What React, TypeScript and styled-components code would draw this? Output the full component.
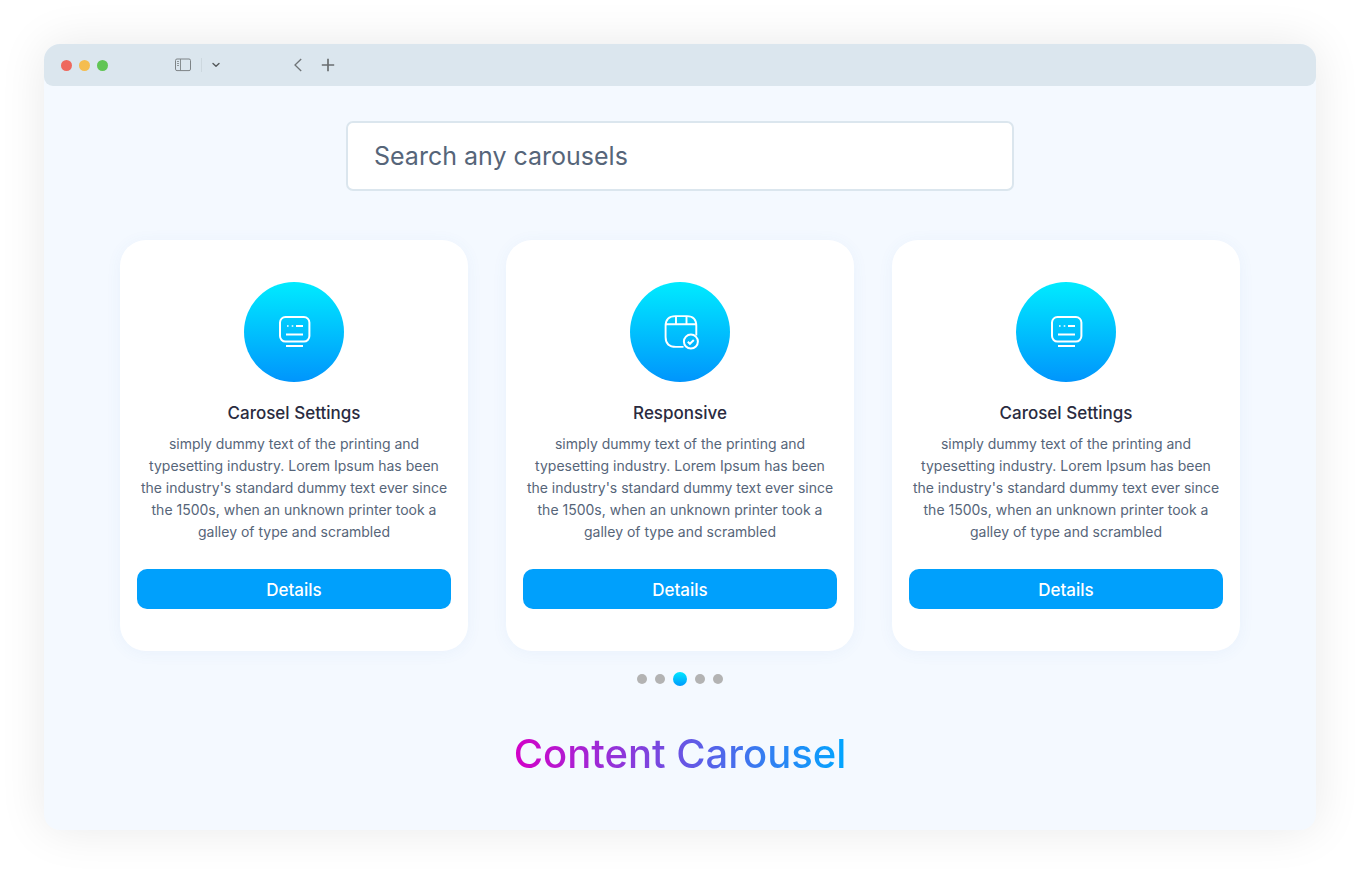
import React from "react";
import styled, { createGlobalStyle } from "styled-components";

const GlobalStyle = createGlobalStyle`
  *, *::before, *::after { box-sizing: border-box; }
  body {
    margin: 0;
    background: #fff;
    font-family: Inter, "Liberation Sans", sans-serif;
  }
`;

const Page = styled.div`
  min-height: 100vh;
  padding: 44px 44px 45px;
  display: flex;
`;

const BrowserWindow = styled.div`
  flex: 1;
  display: flex;
  flex-direction: column;
  border-radius: 16px;
  background: #f4f9ff;
  box-shadow: 0 0 48px rgba(0, 0, 0, 0.09);
`;

const TitleBar = styled.header`
  height: 42px;
  display: flex;
  align-items: center;
  padding: 0 17px;
  border-radius: 16px 16px 9px 9px;
  background: #dbe6ee;
`;

const TrafficLights = styled.div`
  display: flex;
  gap: 7px;
`;

const Light = styled.span<{ $color: string }>`
  width: 11px;
  height: 11px;
  border-radius: 50%;
  background: ${(p) => p.$color};
`;

const ToolGroup = styled.div<{ $start: number; $gap: number }>`
  display: flex;
  align-items: center;
  gap: ${(p) => p.$gap}px;
  margin-left: ${(p) => p.$start}px;
`;

const ToolButton = styled.button`
  display: flex;
  padding: 0;
  border: 0;
  background: none;
  cursor: pointer;
`;

const ToolDivider = styled.span`
  width: 1px;
  height: 14px;
  background: #cdd8df;
`;

const Content = styled.main`
  flex: 1;
  display: flex;
  flex-direction: column;
  align-items: center;
  padding: 35px 76px 48px;
`;

const SearchInput = styled.input`
  width: calc(60% - 4px);
  height: 70px;
  padding: 0 26px;
  border: 2px solid #dbe6ee;
  border-radius: 7px;
  background: #fff;
  color: #566579;
  font: 400 25px/36px Inter, "Liberation Sans", sans-serif;
  outline: none;
  &::placeholder {
    color: #566579;
    opacity: 1;
  }
`;

const CardRow = styled.section`
  align-self: stretch;
  display: grid;
  grid-template-columns: repeat(3, 1fr);
  gap: 38px;
  margin-top: 49px;
`;

const CardBox = styled.article`
  display: flex;
  flex-direction: column;
  align-items: center;
  padding: 42px 17px;
  border-radius: 26px;
  background: #fff;
  box-shadow: 0 2px 16px rgba(60, 120, 200, 0.06);
`;

const IconDisc = styled.div`
  width: 100px;
  height: 100px;
  border-radius: 50%;
  background: linear-gradient(180deg, #00ebff 0%, #0095fc 100%);
  svg { display: block; }
`;

const CardTitle = styled.h2`
  margin: 18px 0 0;
  color: #2a2b40;
  font-size: 17px;
  font-weight: 500;
  line-height: 26px;
`;

const CardText = styled.p`
  margin: 7px 0 0;
  color: #566579;
  font-size: 14px;
  font-weight: 400;
  line-height: 22px;
  text-align: center;
`;

const DetailsButton = styled.button`
  align-self: stretch;
  height: 40px;
  margin-top: 26px;
  border: 0;
  border-radius: 10px;
  background: #00a0fc;
  color: #fff;
  font: 500 17px/26px Inter, "Liberation Sans", sans-serif;
  padding: 2px 0 0;
  cursor: pointer;
`;

const Dots = styled.nav`
  display: flex;
  align-items: center;
  gap: 8px;
  margin-top: 21px;
`;

const Dot = styled.button<{ $active?: boolean }>`
  width: ${(p) => (p.$active ? 14 : 10)}px;
  height: ${(p) => (p.$active ? 14 : 10)}px;
  padding: 0;
  border: 0;
  border-radius: 50%;
  background: ${(p) => (p.$active ? "linear-gradient(180deg, #00e8ff, #0099fc)" : "#b3b3b3")};
`;

const Headline = styled.h1`
  margin: 42px 0 0;
  background: linear-gradient(90deg, #d400c8 0%, #00a6ff 100%);
  background-clip: text;
  -webkit-background-clip: text;
  color: transparent;
  font-size: 40px;
  font-weight: 500;
  line-height: 52px;
`;

const SettingsIcon = () => (
  <svg width="100" height="100" viewBox="0 0 100 100" fill="none" stroke="#fff" strokeWidth="2" aria-hidden="true">
    <rect x="36" y="35" width="29.4" height="24.6" rx="5.5" />
    <path d="M52 44h7M42 52.5h17M42 64h17" />
    <path d="M43 44h1.6M47.7 44h1.6" strokeWidth="1.6" />
  </svg>
);

const ResponsiveIcon = () => (
  <svg width="100" height="100" viewBox="0 0 100 100" fill="none" stroke="#fff" strokeWidth="1.9" aria-hidden="true">
    <path d="M53.5 64.9H46Q35.6 64.9 35.6 55V44Q35.6 34.1 45.5 34.1H57Q66.3 34.1 66.3 44V53.5" />
    <path d="M35.6 42.3h30.7M46 34.1v8.2M56.5 34.1v8.2" />
    <circle cx="60.9" cy="59.6" r="7" strokeWidth="2" />
    <path d="M57.8 59.8l2.1 2 3.9-3.8" strokeWidth="2" />
  </svg>
);

const SidebarIcon = () => (
  <svg width="16" height="14" viewBox="0 0 16 14" fill="none" stroke="#7d8386" aria-hidden="true">
    <rect x="0.5" y="1" width="15" height="11.6" rx="1.5" />
    <path d="M5.5 1v11.6M2.1 3.5h1.8M2.1 5.5h1.8M2.1 7.5h1.8" strokeWidth="0.9" />
  </svg>
);

const ChevronDownIcon = () => (
  <svg width="8" height="6" viewBox="0 0 8 6" fill="none" stroke="#55595b" strokeWidth="1.4" aria-hidden="true">
    <path d="M1 1.5l3 2.8 3-2.8" strokeLinecap="round" strokeLinejoin="round" />
  </svg>
);

const BackIcon = () => (
  <svg width="10" height="14" viewBox="0 0 10 14" fill="none" stroke="#6f7477" strokeWidth="1.3" aria-hidden="true">
    <path d="M8.2 1L2 7l6.2 6" />
  </svg>
);

const PlusIcon = () => (
  <svg width="14" height="14" viewBox="0 0 14 14" fill="none" stroke="#6a6e70" strokeWidth="1.7" aria-hidden="true">
    <path d="M7 .8v12.4M.8 7h12.4" />
  </svg>
);

const description =
  "simply dummy text of the printing and typesetting industry. Lorem Ipsum has been the industry's standard dummy text ever since the 1500s, when an unknown printer took a galley of type and scrambled";

const cards = [
  { title: "Carosel Settings", Icon: SettingsIcon },
  { title: "Responsive", Icon: ResponsiveIcon },
  { title: "Carosel Settings", Icon: SettingsIcon },
];

export default function App() {
  return (
    <>
      <GlobalStyle />
      <Page>
        <BrowserWindow>
          <TitleBar>
            <TrafficLights>
              <Light $color="#ee695e" />
              <Light $color="#f5bd4f" />
              <Light $color="#61c554" />
            </TrafficLights>
            <ToolGroup $start={67} $gap={10}>
              <ToolButton type="button" aria-label="Toggle sidebar"><SidebarIcon /></ToolButton>
              <ToolDivider />
              <ToolButton type="button" aria-label="Tab groups"><ChevronDownIcon /></ToolButton>
            </ToolGroup>
            <ToolGroup $start={73} $gap={18}>
              <ToolButton type="button" aria-label="Back"><BackIcon /></ToolButton>
              <ToolButton type="button" aria-label="New tab"><PlusIcon /></ToolButton>
            </ToolGroup>
          </TitleBar>
          <Content>
            <SearchInput type="search" aria-label="Search any carousels" placeholder="Search any carousels" />
            <CardRow>
              {cards.map(({ title, Icon }, index) => (
                <CardBox key={index}>
                  <IconDisc><Icon /></IconDisc>
                  <CardTitle>{title}</CardTitle>
                  <CardText>{description}</CardText>
                  <DetailsButton type="button">Details</DetailsButton>
                </CardBox>
              ))}
            </CardRow>
            <Dots aria-label="Carousel pages">
              {[0, 1, 2, 3, 4].map((page) => (
                <Dot key={page} type="button" $active={page === 2} aria-label={`Page ${page + 1}`} />
              ))}
            </Dots>
            <Headline>Content Carousel</Headline>
          </Content>
        </BrowserWindow>
      </Page>
    </>
  );
}
